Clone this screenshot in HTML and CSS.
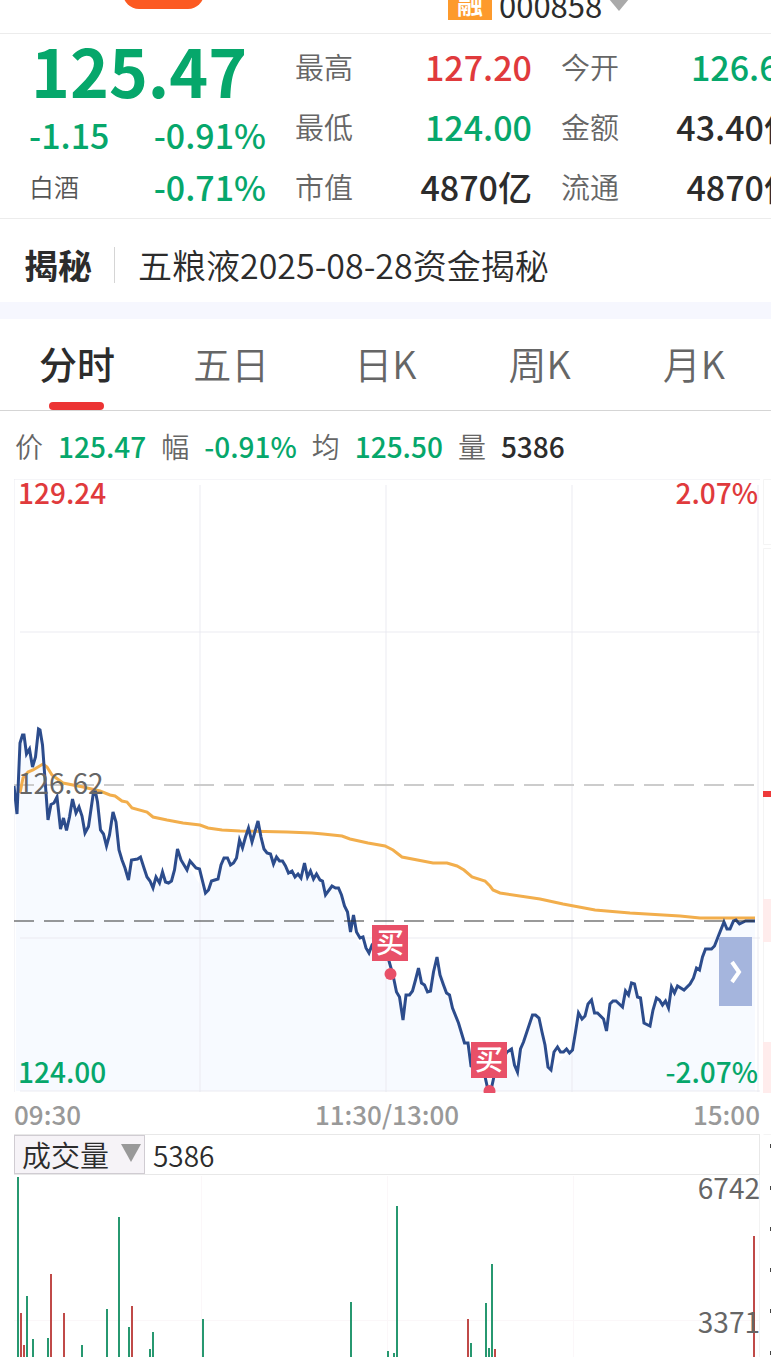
FILE: index.html
```html
<!DOCTYPE html>
<html lang="zh-CN">
<head>
    <meta charset="UTF-8">
    <meta name="viewport" content="width=device-width, initial-scale=1.0">
    <title>五粮液 000858</title>
    <link rel="stylesheet" href="styles.css">
</head>
<body>
    <header class="top-bar">
        <button class="pill" aria-label="切换"></button>
        <div class="stock-code">
            <span class="badge">融</span>
            <span>000858</span>
            <svg class="code-arrow" width="20" height="12" viewBox="0 0 20 12"><path d="M0 0H20L10 12Z" fill="#aaa"/></svg>
        </div>
    </header>

    <section class="quote">
        <div class="quote-main">
            <div class="price green">125.47</div>
            <div class="row green"><span>-1.15</span><span>-0.91%</span></div>
            <div class="row green"><span class="industry">白酒</span><span>-0.71%</span></div>
        </div>
        <dl class="quote-col">
            <div class="cell"><dt>最高</dt><dd class="red">127.20</dd></div>
            <div class="cell"><dt>最低</dt><dd class="green">124.00</dd></div>
            <div class="cell"><dt>市值</dt><dd>4870亿</dd></div>
        </dl>
        <dl class="quote-col">
            <div class="cell"><dt>今开</dt><dd class="green">126.60</dd></div>
            <div class="cell"><dt>金额</dt><dd>43.40亿</dd></div>
            <div class="cell"><dt>流通</dt><dd>4870亿</dd></div>
        </dl>
    </section>

    <section class="news">
        <strong>揭秘</strong>
        <a href="#">五粮液2025-08-28资金揭秘</a>
    </section>

    <nav class="tabs">
        <button class="tab active">分时</button>
        <button class="tab">五日</button>
        <button class="tab">日K</button>
        <button class="tab">周K</button>
        <button class="tab">月K</button>
    </nav>

    <div class="info">
        <span>价</span><b class="green">125.47</b>
        <span>幅</span><b class="green">-0.91%</b>
        <span>均</span><b class="green">125.50</b>
        <span>量</span><b>5386</b>
    </div>

    <main class="board">
        <div class="charts">
            <div class="price-chart">
                <svg class="plot" viewBox="14 479 746 614">
                    <!-- area under the price line -->
                    <path fill="#f7faff" d="M16 1091V800L20 743 24 735 33 767 39 729 48 820 57 797 63 818 72 799 85 833 94 792 106 846 113 812 119 850 128 880 140 857 153 888 174 870 178 849 205 893 224 858 236 858 248 828 258 821 264 849 292 871 322 881 338 888 350 932 369 953 389 961 403 1020 418 968 430 991 437 957 450 995 471 1066 488 1091 507 1052 517 1072 532 1015 539 1018 551 1070 572 1050 578 1013 591 1000 606 1031 613 1001 632 983 644 1023 650 1026 656 998 668 1008 671 987 690 984 705 949 724 922 755 921V1091Z"/>
                    <g stroke="#e8e8f0" stroke-opacity=".45" stroke-width="2">
                        <path d="M14 479.5H760M14.5 479V1092" stroke-width="1"/>
                        <path d="M200 485V1092M386 485V1092M572 485V1092M758 485V1092"/>
                        <path d="M20 632H760M20 938H760M20 1091H760"/>
                    </g>
                    <path d="M14 785H755" stroke="#ccc" stroke-width="2" stroke-dasharray="20 10"/>
                    <polyline class="line avg" points="20,793 23,778 28,772 33,770 43,764 47,767 52,775 63,783 83,787 100,791 110,795 115,796 122,801 127,802 132,808 147,812 153,817 167,820 183,823 200,825 208,828 222,830 240,831 287,832 312,833 323,834 342,836 350,839 368,843 385,846 393,850 402,857 433,863 447,863 457,866 464,870 472,877 485,881 490,886 493,890 500,893 540,899 563,904 595,910 630,913 680,916 700,918 755,918"/>
                    <polyline class="line now" points="14,786 17,814 20,743 22.5,735 24,735 26.5,754 29.5,749 32.5,767 35.5,757 38.5,729 40,730 42.5,745 48,820 51,804.5 54,803 57,797 60.5,829 63.5,818 66.5,830.5 69.5,817 72.5,799 76,813 79,807 82,816 85,833 88.5,826.5 93.5,792 95.5,792 97.5,802 100.5,830 103.5,834 106.5,846 109.5,835 113,812 116,822 119,850 122,860 125,868 128.5,880 131.5,860 137.5,859 140.5,857 144,868 147,877 150,881 153,888 156,877 159.5,883 162.5,872 165.5,882 168.5,883 171.5,881 174.5,870 177.5,849 181,860 187,870 190,861 196,868 199.5,869 205.5,893 208.5,890 211.5,881 218,879 221,865 224,858 227.5,858 230.5,865 233.5,863 236.5,858 239.5,840 242.5,848
                        245.5,837 248.5,828 252,842 258,821 261,837 264,849 267,853 270.5,854 273.5,864 276.5,857 279.5,861 282.5,861 285.5,866 288.5,873 292,871 295,877 298,874 301,878 304.5,863 307.5,877 310.5,871 313.5,879 316.5,874 320,880 322.5,881 325.5,895 332,886 335.5,888 338.5,888 341.5,895 344.5,906 347.5,912 350.5,932 353.5,915 356.5,932 360,938 363,937 366,948 369,953 372,945 380,935 389,961 393,975 396.5,992 399.5,997 403,1020 406,995 409.5,995 412.5,991 415.5,980 418.5,968 421.5,983 424.5,985 427.5,992 430.5,991 433.5,972 437,957 440,975 443.5,985 446.5,993 449.5,995 452.5,1008 458.5,1023 464.5,1043 468,1043 471,1066
                        484,1072 488,1090 491,1090 495,1072 507,1052 511.5,1049 514.5,1065 517.5,1072 520.5,1049 523.5,1042 532.5,1015 535.5,1015 539,1018 542,1032 545,1045 548,1067 551,1070 554,1052 557.5,1047 560.5,1052 563.5,1052 566.5,1049 569.5,1053 572.5,1050 575.5,1032 578.5,1013 582,1019 585,1016 588,1004 591.5,1000 594.5,1013 597.5,1013 603.5,1019 606.5,1031 610,1004 613,1001 616,1001 622.5,1007 625.5,991 628.5,995 631.5,983 634.5,984 637.5,997 640.5,998 644,1023 650,1026 653,1010 656.5,998 659.5,1000 662.5,1005 665.5,1001 668.5,1008 671.5,987 674.5,993 677.5,986 684,990 690,984 693.5,978 696.5,968 699.5,970 702.5,957 705.5,949 711.5,949 714.5,946 718,937 724,922 727,929 730,929 733.5,921 736,920 739.5,924 745.5,921 755,921"/>
                    <path d="M14 921H755" stroke="#333" stroke-opacity=".5" stroke-width="2" stroke-dasharray="20 10"/>
                    <!-- buy markers -->
                    <g fill="#e85068">
                        <path d="M372 925h36v36h-36zM471 1042h36v36h-36z"/>
                        <circle cx="390.5" cy="974" r="6"/>
                        <circle cx="489.5" cy="1091" r="6"/>
                    </g>
                    <g class="buy">
                        <text x="390" y="953">买</text>
                        <text x="489" y="1070">买</text>
                    </g>
                </svg>
                <span class="mark top-left red">129.24</span>
                <span class="mark top-right red">2.07%</span>
                <span class="mark middle">126.62</span>
                <span class="mark bottom-left green">124.00</span>
                <span class="mark bottom-right green">-2.07%</span>
                <button class="expand" aria-label="展开">
                    <svg width="12" height="24" viewBox="0 0 12 24"><path d="M2 2L9 12L2 22" fill="none" stroke="#fff" stroke-width="4"/></svg>
                </button>
            </div>

            <div class="time-axis">
                <span>09:30</span><span>11:30/13:00</span><span>15:00</span>
            </div>

            <div class="volume-head">
                <div class="picker">
                    <select aria-label="指标"><option>成交量</option></select>
                    <svg class="picker-arrow" width="20" height="18" viewBox="0 0 20 18"><path d="M0 0H20L10 18Z" fill="#999"/></svg>
                </div>
                <span>5386</span>
            </div>

            <div class="volume-chart">
                <svg class="plot" viewBox="14 1175 746 182">
                    <path d="M201.5 1176V1357M387.5 1176V1357M573.5 1176V1357M14 1320.5H760" stroke="#fbf7f9"/>
                    <path d="M759.5 1175V1357" stroke="#f3f3f3"/>
                    <g fill="none" stroke-width="2">
                        <path stroke="#279870" d="M18 1177V1357M27 1296V1357M33 1339V1357M48 1338V1357M82 1345V1357M107 1309V1357M119 1217V1357M129 1327V1357M150 1349V1357M153 1332V1357M203 1319V1357M351 1302V1357M388 1351V1357M394 1353V1357M397 1206V1357M471 1343V1357M486 1303V1357M489 1348V1357M492 1264V1357"/>
                        <path stroke="#c04a48" d="M21 1313V1357M24 1345V1357M51 1274V1357M64 1313V1357M132 1306V1357M468 1319V1357M495 1349V1357M754 1236V1357"/>
                    </g>
                </svg>
                <span class="mark vol-max">6742</span>
                <span class="mark vol-half">3371</span>
            </div>
        </div>

        <!-- order book, only its left edge is on screen -->
        <aside class="order-book">
            <svg width="8" height="878" viewBox="0 0 8 878">
                <path d="M8 .5H.5V65.5H8M8 69.5H.5V614M8 655.5H.5" fill="none" stroke="#f4f4f4"/>
                <path d="M0 420h8v43H0zM0 563h8v51H0z" fill="#ffecec"/>
                <path d="M0 312h8v6H0z" fill="#ee3a3a"/>
                <path d="M7 665h1v4H7zM7 707h1v4H7zM7 748h1v4H7zM7 789h1v4H7zM7 830h1v4H7zM7 872h1v4H7z" fill="#444"/>
            </svg>
        </aside>
    </main>
</body>
</html>
```
FILE: styles.css
```css
* {
    box-sizing: border-box;
}
body {
    margin: 0;
    background: #fff;
    color: #2c2c2c;
    font-family: "Noto Sans CJK SC", "Noto Sans", sans-serif;
    font-size: 28px;
    overflow-x: hidden;
}
button {
    border: 0;
    padding: 0;
    background: none;
    color: inherit;
    font-family: inherit;
    cursor: pointer;
}
dl, dd {
    margin: 0;
}
.green {
    color: #06a76b;
}
.red {
    color: #e03a3c;
}

/* top bar */
.top-bar {
    display: flex;
    align-items: flex-end;
    height: 34px;
    padding: 0 0 13px 123px;
    border-bottom: 1px solid #ececec;
}
.pill {
    width: 81px;
    height: 40px;
    margin-bottom: 11px;
    border-radius: 16px;
    background: #fc5a22;
}
.stock-code {
    display: flex;
    align-items: flex-end;
    gap: 7px;
    margin-left: 244px;
    font-size: 31px;
    line-height: 1;
}
.badge {
    width: 44px;
    padding: 4px 0;
    background: #fd9a2c;
    color: #fff;
    font-size: 26px;
    font-weight: bold;
    text-align: center;
}
.code-arrow {
    margin-bottom: 9px;
}

/* quote */
.quote {
    display: grid;
    grid-template-columns: repeat(3, 237px);
    gap: 29px;
    padding-left: 29px;
    height: 185px;
    border-bottom: 1px solid #ececec;
    overflow: hidden;
}
.price {
    margin: 2px 0 6px 2px;
    font-size: 66px;
    font-weight: bold;
    line-height: 66px;
}
.row {
    display: flex;
    justify-content: space-between;
    align-items: center;
    height: 52px;
    font-size: 34px;
    font-weight: 500;
}
.industry {
    color: #555;
    font-size: 25px;
    font-weight: 350;
}
.quote-col {
    padding-top: 2px;
}
.cell {
    display: flex;
    justify-content: space-between;
    align-items: center;
    height: 60px;
    font-weight: 500;
    font-size: 34px;
    white-space: nowrap;
}
.cell dt {
    color: #666;
    font-size: 29px;
    font-weight: 350;
}

/* news */
.news {
    display: flex;
    align-items: center;
    height: 100px;
    padding: 8px 24px 0;
    border-bottom: 17px solid #f6f7fe;
    font-size: 34px;
}
.news a {
    margin-left: 22px;
    padding-left: 23px;
    border-left: 1px solid #d5d5d5;
    color: inherit;
    font-weight: 350;
    line-height: 36px;
    text-decoration: none;
}

/* tabs */
.tabs {
    display: flex;
    height: 92px;
    border-bottom: 1px solid #d5d5d5;
}
.tab {
    position: relative;
    flex: 1;
    padding-bottom: 4px;
    color: #666;
    font-size: 38px;
    font-weight: 350;
}
.tab.active {
    color: #2c2c2c;
    font-weight: 500;
}
.tab.active::after {
    content: "";
    position: absolute;
    left: 50%;
    bottom: 0;
    width: 55px;
    height: 8px;
    margin-left: -28px;
    border-radius: 4px;
    background: #ec3333;
}

/* numbers above the chart */
.info {
    display: flex;
    align-items: center;
    gap: 15px;
    height: 68px;
    padding: 2px 0 0 15px;
}
.info span {
    color: #666;
    font-weight: 350;
}
.info b {
    font-weight: 500;
}

/* charts */
.board {
    display: flex;
    gap: 3px;
    padding-left: 14px;
}
.charts {
    flex: 1;
    min-width: 0;
}
.price-chart, .volume-chart {
    position: relative;
}
.plot {
    display: block;
    width: 100%;
}
.line {
    fill: none;
    stroke-width: 3;
}
.avg {
    stroke: #f2ae4c;
}
.now {
    stroke: #2c4c8c;
}
.buy {
    fill: #fff;
    font-size: 28px;
    font-weight: 500;
    text-anchor: middle;
}
.mark {
    position: absolute;
    font-weight: 500;
    line-height: 28px;
}
.top-left {
    top: -1px;
    left: 4px;
}
.top-right {
    top: -1px;
    right: 2px;
}
.middle {
    top: 47%;
    left: 4px;
    color: #666;
    font-weight: 400;
}
.bottom-left {
    bottom: 8px;
    left: 4px;
}
.bottom-right {
    bottom: 8px;
    right: 2px;
}
.expand {
    display: flex;
    align-items: center;
    justify-content: center;
    position: absolute;
    right: 8px;
    bottom: 87px;
    width: 33px;
    height: 69px;
    background: #a5b5dd;
}
.time-axis {
    display: flex;
    justify-content: space-between;
    color: #999;
    font-size: 26px;
    font-weight: 500;
    line-height: 41px;
}
.volume-head {
    display: flex;
    align-items: center;
    gap: 8px;
    height: 41px;
    border: 1px solid #e8e8e8;
    border-left: 0;
    font-weight: 350;
}
.picker {
    position: relative;
    align-self: stretch;
    width: 131px;
}
.picker select {
    appearance: none;
    width: 100%;
    height: 100%;
    padding: 0 0 0 7px;
    border: 1px solid #d0ccd2;
    border-radius: 0;
    background: #f6f3f7;
    color: #2c2c2c;
    font-family: inherit;
    font-size: 29px;
    font-weight: 350;
    line-height: 37px;
}
.picker-arrow {
    position: absolute;
    top: 9px;
    right: 4px;
    pointer-events: none;
}
.vol-max, .vol-half {
    right: 0;
    color: #666;
    font-weight: 400;
}
.vol-max {
    top: -2px;
}
.vol-half {
    bottom: 22px;
}
.order-book {
    width: 8px;
    height: 878px;
}
```
